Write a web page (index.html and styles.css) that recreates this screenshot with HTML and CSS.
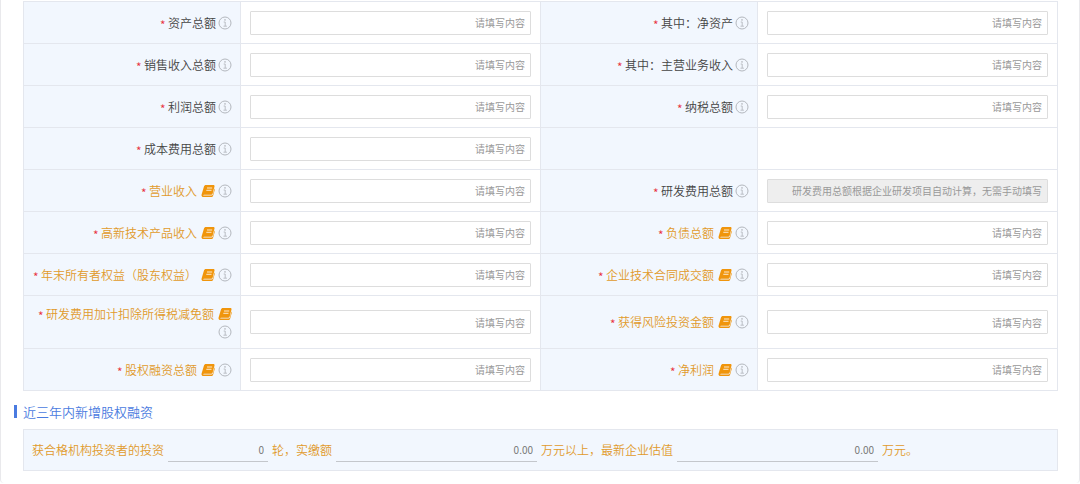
FILE: index.html
```html
<!DOCTYPE html>
<html lang="zh-CN">
<head>
    <meta charset="UTF-8">
    <title>财务信息</title>
    <link rel="stylesheet" href="styles.css">
</head>
<body>
<!-- shared icons -->
<svg class="sprite" aria-hidden="true">
    <symbol id="info" viewBox="0 0 14 14">
        <circle cx="7" cy="7" r="6" fill="none" stroke="currentColor"/>
        <path d="M5.700 6h1.500v4M5.500 10.200h3.400" fill="none" stroke="currentColor" stroke-width="0.9"/>
        <circle cx="7" cy="3.900" r="0.800" fill="currentColor"/>
    </symbol>
    <symbol id="book" viewBox="0 0 14 14">
        <path d="M5 1h7.300c1 0 1.500.7 1.200 1.600L11.600 9.800c-.2.700-.7 1-1.400 1H3c-.9 0-1.100.8-.2.800h7.700c.7 0 1.200-.4 1.400-1.100L13.500 4.500c.4.300.4.900.3 1.300l-1.700 5.900c-.3.800-.9 1.300-1.700 1.300H2.600C1 13 .2 11.700.6 10.400L2.900 2.700C3.200 1.600 4 1 5 1z" fill="currentColor"/>
        <path d="M6 4h5.200M5.300 6.300h5.200" stroke="#fff" stroke-width="0.8"/>
    </symbol>
</svg>

<div class="card">
    <table class="form-table">
        <tr>
            <th><label for="assets"><i>*</i> 资产总额</label><svg class="info"><use href="#info"/></svg></th>
            <td><input id="assets" type="text" placeholder="请填写内容"></td>
            <th><label for="net-assets"><i>*</i> 其中：净资产</label><svg class="info"><use href="#info"/></svg></th>
            <td><input id="net-assets" type="text" placeholder="请填写内容"></td>
        </tr>
        <tr>
            <th><label for="sales"><i>*</i> 销售收入总额</label><svg class="info"><use href="#info"/></svg></th>
            <td><input id="sales" type="text" placeholder="请填写内容"></td>
            <th><label for="main-sales"><i>*</i> 其中：主营业务收入</label><svg class="info"><use href="#info"/></svg></th>
            <td><input id="main-sales" type="text" placeholder="请填写内容"></td>
        </tr>
        <tr>
            <th><label for="profit"><i>*</i> 利润总额</label><svg class="info"><use href="#info"/></svg></th>
            <td><input id="profit" type="text" placeholder="请填写内容"></td>
            <th><label for="tax"><i>*</i> 纳税总额</label><svg class="info"><use href="#info"/></svg></th>
            <td><input id="tax" type="text" placeholder="请填写内容"></td>
        </tr>
        <tr>
            <th><label for="cost"><i>*</i> 成本费用总额</label><svg class="info"><use href="#info"/></svg></th>
            <td><input id="cost" type="text" placeholder="请填写内容"></td>
            <th></th>
            <td></td>
        </tr>
        <tr>
            <th><label class="key" for="revenue"><i>*</i> 营业收入</label><svg class="book"><use href="#book"/></svg><svg class="info"><use href="#info"/></svg></th>
            <td><input id="revenue" type="text" placeholder="请填写内容"></td>
            <th><label for="rd-cost"><i>*</i> 研发费用总额</label><svg class="info"><use href="#info"/></svg></th>
            <td><input id="rd-cost" type="text" placeholder="研发费用总额根据企业研发项目自动计算，无需手动填写" disabled></td>
        </tr>
        <tr>
            <th><label class="key" for="hitech"><i>*</i> 高新技术产品收入</label><svg class="book"><use href="#book"/></svg><svg class="info"><use href="#info"/></svg></th>
            <td><input id="hitech" type="text" placeholder="请填写内容"></td>
            <th><label class="key" for="debt"><i>*</i> 负债总额</label><svg class="book"><use href="#book"/></svg><svg class="info"><use href="#info"/></svg></th>
            <td><input id="debt" type="text" placeholder="请填写内容"></td>
        </tr>
        <tr>
            <th><label class="key" for="equity"><i>*</i> 年末所有者权益（股东权益）</label><svg class="book"><use href="#book"/></svg><svg class="info"><use href="#info"/></svg></th>
            <td><input id="equity" type="text" placeholder="请填写内容"></td>
            <th><label class="key" for="contract"><i>*</i> 企业技术合同成交额</label><svg class="book"><use href="#book"/></svg><svg class="info"><use href="#info"/></svg></th>
            <td><input id="contract" type="text" placeholder="请填写内容"></td>
        </tr>
        <tr>
            <th><label class="key" for="deduction"><i>*</i> 研发费用加计扣除所得税减免额</label><svg class="book"><use href="#book"/></svg> <svg class="info"><use href="#info"/></svg></th>
            <td><input id="deduction" type="text" placeholder="请填写内容"></td>
            <th><label class="key" for="venture"><i>*</i> 获得风险投资金额</label><svg class="book"><use href="#book"/></svg><svg class="info"><use href="#info"/></svg></th>
            <td><input id="venture" type="text" placeholder="请填写内容"></td>
        </tr>
        <tr>
            <th><label class="key" for="financing"><i>*</i> 股权融资总额</label><svg class="book"><use href="#book"/></svg><svg class="info"><use href="#info"/></svg></th>
            <td><input id="financing" type="text" placeholder="请填写内容"></td>
            <th><label class="key" for="net-profit"><i>*</i> 净利润</label><svg class="book"><use href="#book"/></svg><svg class="info"><use href="#info"/></svg></th>
            <td><input id="net-profit" type="text" placeholder="请填写内容"></td>
        </tr>
    </table>

    <h2>近三年内新增股权融资</h2>
    <div class="invest">
        <label for="rounds">获合格机构投资者的投资</label>
        <input class="short" id="rounds" type="text" value="0">
        <label for="paid">轮，实缴额</label>
        <input id="paid" type="text" value="0.00">
        <label for="valuation">万元以上，最新企业估值</label>
        <input id="valuation" type="text" value="0.00">
        <span>万元。</span>
    </div>
</div>
</body>
</html>
```

FILE: styles.css
```css
* {
    box-sizing: border-box;
}

body {
    margin: 0;
    font-family: "Noto Sans CJK SC", sans-serif;
    font-size: 12px;
    font-weight: 350;
    line-height: 16px;
    color: #444;
    background-color: #fff;
}

.sprite {
    display: none;
}

.card {
    padding: 1px 21px 12px 22px;
    border: 1px solid #e9e9ec;
    border-width: 0 1px;
    border-radius: 0 0 4px 4px;
}

/* form table */
.form-table {
    width: 100%;
    table-layout: fixed;
    border-collapse: collapse;
}

th, td {
    height: 42px;
    border: 1px solid #e4e7ee;
}

th {
    width: 21%;
    padding: 10px 8px 8px 4px;
    background-color: #f2f7fe;
    font-weight: 350;
    text-align: right;
}

td {
    width: 29%;
    padding: 0 9px;
}

i {
    font-style: normal;
    vertical-align: -2px;
    color: #e8303c;
}

.key {
    color: #e19a2b;
}

.info, .book {
    width: 14px;
    height: 14px;
    vertical-align: -2px;
}

.info {
    margin-left: 2px;
    color: #b4b8be;
}

.book {
    margin-left: 4px;
    color: #f0950c;
}

.book + .info {
    margin-left: 3px;
}

input {
    font-family: inherit;
    font-size: 10px;
    text-align: right;
    color: #777;
}

td input {
    display: block;
    width: 100%;
    height: 24px;
    padding: 0 5px;
    border: 1px solid #ddd;
    border-radius: 1px;
    background-color: #fff;
}

td input:disabled {
    background-color: #eee;
}

input::placeholder {
    color: #999;
}

/* equity financing */
h2 {
    margin: 14px 0 11px -9px;
    padding-left: 6px;
    border-left: 3px solid #4a7be0;
    font-size: 13px;
    font-weight: 350;
    line-height: 13px;
    color: #4a7be0;
}

.invest {
    display: flex;
    align-items: center;
    gap: 4px;
    padding: 8px;
    border: 1px solid #e4e7ee;
    background-color: #f2f7fe;
    color: #e19a2b;
}

.invest input {
    width: 201px;
    height: 24px;
    padding: 0 4px;
    border: 0;
    border-bottom: 1px solid #c4c7cc;
    background-color: transparent;
}

.invest .short {
    width: 100px;
}
```
